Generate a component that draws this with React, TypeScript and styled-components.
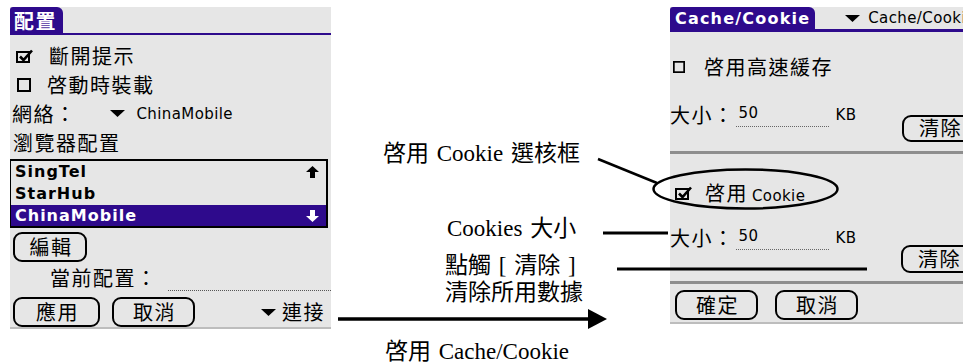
import React from "react";
import styled, { createGlobalStyle } from "styled-components";

const purple = "#2e0a8c";
const screenGray = "#e6e6e6";
const cjk = `"Noto Sans CJK TC", "Noto Sans CJK SC", sans-serif`;
const palmLatin = `"DejaVu Sans", "Noto Sans CJK TC", sans-serif`;

const GlobalStyle = createGlobalStyle`
	html, body {
		margin: 0;
		padding: 0;
		background: #fff;
	}

	body {
		color: #000;
		font-family: ${cjk};
	}
`;

const Stage = styled.div`
	position: relative;
	display: flex;
	align-items: flex-start;
	width: 973px;
	height: 364px;
	overflow: hidden;
`;

const Screen = styled.section<{ $width: number; $height: number; $left?: number }>`
	display: flex;
	flex: none;
	flex-direction: column;
	box-sizing: border-box;
	width: ${({ $width }) => $width}px;
	height: ${({ $height }) => $height}px;
	margin: 7px 0 0 ${({ $left = 0 }) => $left}px;
	overflow: hidden;
	font-family: ${cjk};
	font-size: 20px;
	line-height: 1.2;
	letter-spacing: 1.5px;
	background: ${screenGray};
	border-bottom: 2px solid #bdbdbd;
`;

const TabBar = styled.div<{ $height: number; $rule: number }>`
	display: flex;
	flex: none;
	align-items: stretch;
	height: ${({ $height }) => $height}px;
	border-bottom: ${({ $rule }) => $rule}px solid ${purple};
`;

const Tab = styled.div<{ $latin?: boolean }>`
	display: flex;
	align-items: center;
	padding: 0 ${({ $latin }) => ($latin ? "5px 0 5px" : "6px 0 4px")};
	color: #fff;
	font-family: ${({ $latin }) => ($latin ? palmLatin : cjk)};
	font-size: ${({ $latin }) => ($latin ? "16px" : "20px")};
	font-weight: 700;
	line-height: normal;
	letter-spacing: ${({ $latin }) => ($latin ? "1.2px" : "1.5px")};
	background: ${purple};
	border-radius: 3px 6px 0 0;
`;

const Row = styled.div<{ $height: number; $top?: number; $indent?: number; $gap?: number }>`
	display: flex;
	flex: none;
	align-items: center;
	gap: ${({ $gap = 0 }) => $gap}px;
	height: ${({ $height }) => $height}px;
	margin-top: ${({ $top = 0 }) => $top}px;
	padding-left: ${({ $indent = 0 }) => $indent}px;
`;

const Trigger = styled.div<{ $left?: number; $gap: number; $latin?: boolean }>`
	display: flex;
	flex: none;
	align-items: center;
	gap: ${({ $gap }) => $gap}px;
	margin-left: ${({ $left = 0 }) => $left}px;
	font-family: ${({ $latin }) => ($latin ? palmLatin : cjk)};
	font-size: ${({ $latin }) => ($latin ? "15px" : "20px")};
	letter-spacing: ${({ $latin }) => ($latin ? "0.4px" : "1.5px")};
	white-space: nowrap;
`;

const ListBox = styled.div`
	display: flex;
	flex: none;
	flex-direction: column;
	box-sizing: border-box;
	width: 319px;
	margin: 2px 0 0 -1px;
	border: 2px solid #000;
`;

const ListRow = styled.div<{ $height: number; $selected?: boolean }>`
	display: flex;
	align-items: center;
	justify-content: space-between;
	height: ${({ $height }) => $height}px;
	padding: 0 7px 0 4px;
	color: ${({ $selected }) => ($selected ? "#fff" : "#000")};
	font-family: ${palmLatin};
	font-size: 16px;
	font-weight: 700;
	letter-spacing: 1px;
	background: ${({ $selected }) => ($selected ? purple : "transparent")};
`;

const PalmButton = styled.button<{ $width: number; $height: number; $top?: number; $left?: number }>`
	display: flex;
	flex: none;
	align-items: center;
	justify-content: center;
	box-sizing: border-box;
	width: ${({ $width }) => $width}px;
	height: ${({ $height }) => $height}px;
	margin: ${({ $top = 0 }) => $top}px 0 0 ${({ $left = 0 }) => $left}px;
	padding: 0 0 1px 2px;
	color: #000;
	font-family: ${cjk};
	font-size: 20px;
	line-height: 1.2;
	letter-spacing: 1.5px;
	background: transparent;
	border: 2px solid #000;
	border-radius: 9px;
`;

const DottedField = styled.div`
	flex: 1;
	align-self: flex-end;
	margin: 0 0 3px 10px;
	border-bottom: 1px dotted #555;
`;

const ButtonBar = styled.div<{ $top: number; $gap: number; $indent: number }>`
	display: flex;
	flex: none;
	align-items: center;
	gap: ${({ $gap }) => $gap}px;
	height: 30px;
	margin-top: ${({ $top }) => $top}px;
	padding: 0 6px 0 ${({ $indent }) => $indent}px;
`;

const Spacer = styled.div`
	flex: 1;
`;

const SizeRow = styled.div<{ $top: number }>`
	display: flex;
	flex: none;
	align-items: flex-start;
	margin-top: ${({ $top }) => $top}px;
`;

const SizeLabel = styled.span`
	flex: none;
	line-height: 30px;
	white-space: nowrap;
`;

const SizeField = styled.span`
	display: flex;
	flex: none;
	align-items: center;
	box-sizing: border-box;
	width: 93px;
	height: 27px;
	margin-left: 1px;
	padding-left: 3px;
	font-family: ${palmLatin};
	font-size: 15px;
	letter-spacing: 0.4px;
	border-bottom: 1px dotted #666;
`;

const Unit = styled.span`
	flex: none;
	margin-left: 7px;
	font-family: ${palmLatin};
	font-size: 15px;
	line-height: 30px;
	letter-spacing: 0.4px;
`;

const Small = styled.span`
	margin-left: 4px;
	font-family: ${palmLatin};
	font-size: 15px;
	letter-spacing: 0.4px;
`;

const Separator = styled.div<{ $top: number }>`
	flex: none;
	height: 3px;
	margin-top: ${({ $top }) => $top}px;
	background: #8e8e8e;
`;

const Notes = styled.div`
	display: flex;
	flex: none;
	flex-direction: column;
	align-items: flex-start;
	width: 339px;
	font-family: "Liberation Serif", "Noto Sans CJK TC", serif;
	font-size: 23px;
	line-height: 28px;
`;

const Note = styled.p<{ $top: number; $indent: number; $lineHeight?: number }>`
	margin: ${({ $top }) => $top}px 0 0 ${({ $indent }) => $indent}px;
	line-height: ${({ $lineHeight = 28 }) => $lineHeight}px;
	white-space: nowrap;
	word-spacing: 2px;
`;

const Overlay = styled.svg`
	position: absolute;
	top: 0;
	left: 0;
	pointer-events: none;
`;

const Glyph = styled.svg`
	display: block;
	flex: none;
`;

function CheckBox({ checked, width, height }: { checked?: boolean; height: number; width: number }) {
	if (checked) {
		return (
			<Glyph height={height} viewBox="0 0 17 14" width={width}>
				<rect fill="none" height="10" stroke="#000" strokeWidth="2" width="12" x="1" y="3" />
				<path d="M4 7.5 L7.5 11 L16 1.5" fill="none" stroke="#000" strokeWidth="2.6" />
			</Glyph>
		);
	}
	return (
		<Glyph height={height} viewBox="0 0 14 14" width={width}>
			<rect fill="none" height="12" stroke="#000" strokeWidth="2" width="12" x="1" y="1" />
		</Glyph>
	);
}

function DropTriangle() {
	return (
		<Glyph height="7" viewBox="0 0 15 7" width="15">
			<polygon fill="#000" points="0,0 15,0 7.5,7" />
		</Glyph>
	);
}

function ScrollArrow({ down, color }: { color: string; down?: boolean }) {
	return (
		<Glyph height="12" viewBox="0 0 13 12" width="13">
			<polygon
				fill={color}
				points={down ? "6.5,12 13,6 9,6 9,0 4,0 4,6 0,6" : "6.5,0 13,6 9,6 9,12 4,12 4,6 0,6"}
			/>
		</Glyph>
	);
}

const profiles = ["SingTel", "StarHub", "ChinaMobile"];

export default function App() {
	return (
		<>
			<GlobalStyle />
			<Stage>
				<Screen $height={322} $left={10} $width={321}>
					<TabBar $height={26} $rule={2}>
						<Tab>配置</Tab>
					</TabBar>
					<Row $gap={16} $height={29} $indent={6} $top={6}>
						<CheckBox checked height={14} width={17} />
						斷開提示
					</Row>
					<Row $gap={16} $height={29} $indent={7}>
						<CheckBox height={14} width={14} />
						啓動時裝載
					</Row>
					<Row $height={29} $indent={2}>
						網絡：
						<Trigger $gap={12} $latin $left={33}>
							<DropTriangle />
							ChinaMobile
						</Trigger>
					</Row>
					<Row $height={29} $indent={3}>
						瀏覽器配置
					</Row>
					<ListBox>
						{profiles.map((name, i) => (
							<ListRow $height={i === 2 ? 21 : 22} $selected={i === 2} key={name}>
								{name}
								{i === 0 && <ScrollArrow color="#000" />}
								{i === 2 && <ScrollArrow color="#fff" down />}
							</ListRow>
						))}
					</ListBox>
					<PalmButton $height={30} $left={3} $top={4} $width={74}>
						編輯
					</PalmButton>
					<Row $height={32} $indent={40}>
						當前配置：
						<DottedField />
					</Row>
					<ButtonBar $gap={12} $indent={3} $top={3}>
						<PalmButton $height={30} $width={87}>
							應用
						</PalmButton>
						<PalmButton $height={30} $width={83}>
							取消
						</PalmButton>
						<Spacer />
						<Trigger $gap={6}>
							<DropTriangle />
							連接
						</Trigger>
					</ButtonBar>
				</Screen>

				<Notes>
					<Note $indent={52} $top={140}>
						啓用 Cookie 選核框
					</Note>
					<Note $indent={116} $top={47}>
						Cookies 大小
					</Note>
					<Note $indent={114} $lineHeight={27} $top={9}>
						點觸 [ 清除 ]
						<br />
						清除所用數據
					</Note>
					<Note $indent={54} $top={32}>
						啓用 Cache/Cookie
					</Note>
				</Notes>

				<Screen $height={317} $width={293}>
					<TabBar $height={22} $rule={3}>
						<Tab $latin>Cache/Cookie</Tab>
						<Trigger $gap={8} $latin $left={30}>
							<DropTriangle />
							Cache/Cookie
						</Trigger>
					</TabBar>
					<Row $gap={19} $height={30} $indent={3} $top={20}>
						<CheckBox height={12} width={12} />
						啓用高速緩存
					</Row>
					<SizeRow $top={18}>
						<SizeLabel>大小：</SizeLabel>
						<SizeField>50</SizeField>
						<Unit>KB</Unit>
						<PalmButton $height={27} $left={46} $top={15} $width={74}>
							清除
						</PalmButton>
					</SizeRow>
					<Separator $top={9} />
					<Row $gap={13} $height={30} $indent={5} $top={24}>
						<CheckBox checked height={14} width={17} />
						<span>
							啓用<Small>Cookie</Small>
						</span>
					</Row>
					<SizeRow $top={15}>
						<SizeLabel>大小：</SizeLabel>
						<SizeField>50</SizeField>
						<Unit>KB</Unit>
						<PalmButton $height={28} $left={45} $top={22} $width={74}>
							清除
						</PalmButton>
					</SizeRow>
					<Separator $top={8} />
					<ButtonBar $gap={17} $indent={5} $top={6}>
						<PalmButton $height={30} $width={83}>
							確定
						</PalmButton>
						<PalmButton $height={30} $width={83}>
							取消
						</PalmButton>
					</ButtonBar>
				</Screen>

				<Overlay height="364" viewBox="0 0 973 364" width="973">
					<line stroke="#000" strokeWidth="3.5" x1="338" x2="592" y1="319" y2="319" />
					<polygon fill="#000" points="588,309 607,319 588,329" />
					<line stroke="#000" strokeWidth="2.5" x1="598" x2="657" y1="159" y2="183" />
					<ellipse cx="745.5" cy="189" fill="none" rx="92" ry="19.5" stroke="#000" strokeWidth="2.5" />
					<line stroke="#000" strokeWidth="3" x1="603" x2="668" y1="233" y2="233" />
					<line stroke="#000" strokeWidth="3" x1="617" x2="867" y1="269" y2="269" />
				</Overlay>
			</Stage>
		</>
	);
}
